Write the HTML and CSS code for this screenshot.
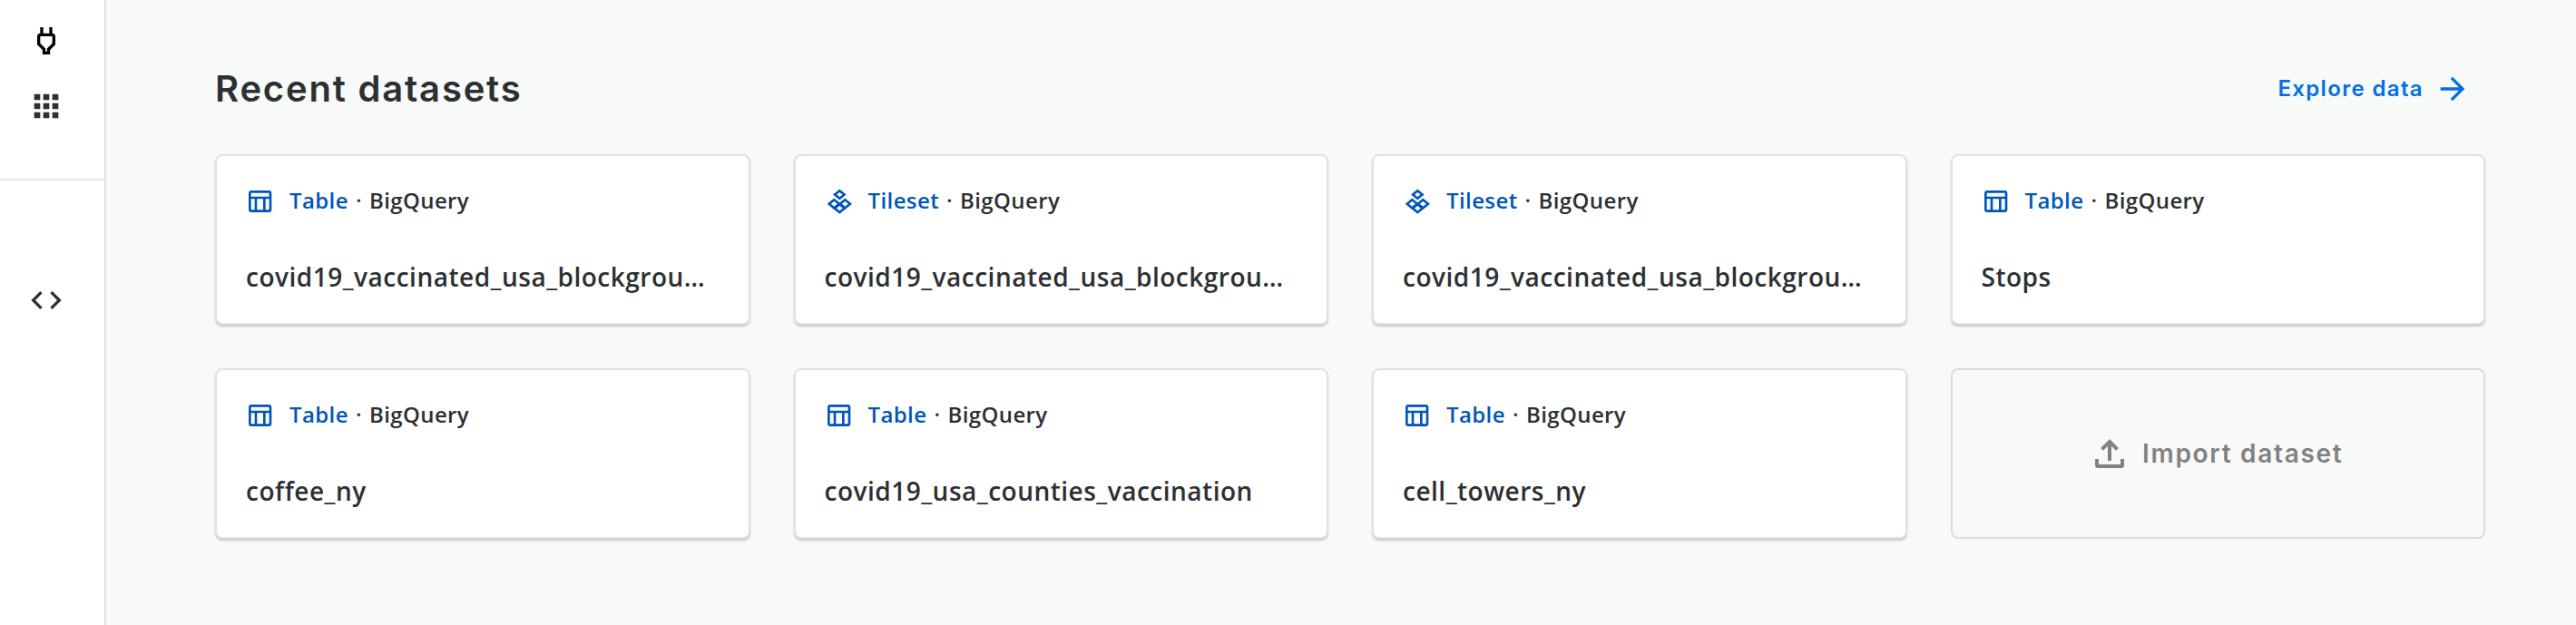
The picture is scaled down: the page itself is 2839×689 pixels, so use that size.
FILE: index.html
```
<!DOCTYPE html>
<html lang="en">
<head>
<meta charset="utf-8">
<title>Recent datasets</title>
<link rel="stylesheet" href="styles.css">
</head>
<body>
<svg class="sprite" aria-hidden="true">
  <symbol id="i-table" viewBox="0 0 24 24"><path d="M20 3H5C3.900 3 3 3.900 3 5v14c0 1.100.9 2 2 2h15c1.100 0 2-.9 2-2V5c0-1.100-.9-2-2-2zm0 2v3H5V5h15zm-5 14h-5v-9h5v9zM5 10h3v9H5v-9zm12 9v-9h3v9h-3z"/></symbol>
  <symbol id="i-tileset" viewBox="0 0 24 24"><g fill="none" stroke="currentColor" stroke-width="2"><path d="M13 3.200l3.900 3.200-3.900 3.200-3.900-3.200z"/><path d="M8.500 10.700l4.200 3.400-4.200 3.400-4.200-3.400z"/><path d="M17.500 10.700l4.200 3.400-4.200 3.400-4.200-3.400z"/><path d="M13 14.400l4.200 3.300L13 21l-4.200-3.300z"/></g></symbol>
</svg>
<div class="app">
  <nav class="sidebar">
    <div class="nav-top">
      <svg class="nav-icon plug" viewBox="0 0 24 24"><path d="M16 9v4.660l-3.500 3.510V19h-1v-1.830L8 13.650V9h8m0-6h-2v4h-4V3H8v4h-.01C6.900 6.990 6 7.890 6 8.980v5.520L9.500 18v3h5v-3l3.500-3.510V9c0-1.100-.9-2-2-2V3z"/></svg>
      <svg class="nav-icon" viewBox="0 0 24 24"><path d="M4 4h4v4H4zM10 4h4v4h-4zM16 4h4v4h-4zM4 10h4v4H4zM10 10h4v4h-4zM16 10h4v4h-4zM4 16h4v4H4zM10 16h4v4h-4zM16 16h4v4h-4z"/></svg>
    </div>
    <div class="nav-bottom">
      <svg class="nav-icon" viewBox="0 0 24 24"><path d="M9.400 16.600L4.800 12l4.600-4.600L8 6l-6 6 6 6 1.400-1.400zm5.200 0l4.600-4.600-4.600-4.600L16 6l6 6-6 6-1.400-1.400z"/></svg>
    </div>
  </nav>
  <main class="main">
    <header class="head">
      <h1 class="heading">Recent datasets</h1>
      <a class="explore"><span class="explore-label">Explore data</span><svg class="arrow" viewBox="0 0 24 24"><path d="M12 4l-1.410 1.410L16.170 11H4v2h12.170l-5.580 5.590L12 20l8-8z"/></svg></a>
    </header>
    <section class="grid">
      <article class="card"><div class="meta"><svg class="type-icon"><use href="#i-table"/></svg><span class="type">Table</span><span class="dot">·</span><span class="source">BigQuery</span></div><h2 class="name">covid19_vaccinated_usa_blockgrou…</h2></article>
      <article class="card"><div class="meta"><svg class="type-icon"><use href="#i-tileset"/></svg><span class="type">Tileset</span><span class="dot">·</span><span class="source">BigQuery</span></div><h2 class="name">covid19_vaccinated_usa_blockgrou…</h2></article>
      <article class="card"><div class="meta"><svg class="type-icon"><use href="#i-tileset"/></svg><span class="type">Tileset</span><span class="dot">·</span><span class="source">BigQuery</span></div><h2 class="name">covid19_vaccinated_usa_blockgrou…</h2></article>
      <article class="card"><div class="meta"><svg class="type-icon"><use href="#i-table"/></svg><span class="type">Table</span><span class="dot">·</span><span class="source">BigQuery</span></div><h2 class="name">Stops</h2></article>
      <article class="card"><div class="meta"><svg class="type-icon"><use href="#i-table"/></svg><span class="type">Table</span><span class="dot">·</span><span class="source">BigQuery</span></div><h2 class="name">coffee_ny</h2></article>
      <article class="card"><div class="meta"><svg class="type-icon"><use href="#i-table"/></svg><span class="type">Table</span><span class="dot">·</span><span class="source">BigQuery</span></div><h2 class="name">covid19_usa_counties_vaccination</h2></article>
      <article class="card"><div class="meta"><svg class="type-icon"><use href="#i-table"/></svg><span class="type">Table</span><span class="dot">·</span><span class="source">BigQuery</span></div><h2 class="name">cell_towers_ny</h2></article>
      <button class="import"><svg class="import-icon" viewBox="0 0 24 24"><path d="M7 9l1.410 1.410L11 7.830V16h2V7.830l2.590 2.580L17 9l-5-5-5 5z"/><path d="M4 15h2v3h12v-3h2v3.500a1.500 1.500 0 0 1-1.500 1.500h-13A1.500 1.500 0 0 1 4 18.500z"/></svg><span class="import-label">Import dataset</span></button>
    </section>
  </main>
</div>
</body>
</html>
```

FILE: styles.css
```
* { box-sizing: border-box; }
body { margin: 0; background: #f8faf9; color: #2c3032; font-family: "Open Sans", "Noto Sans", sans-serif; }
svg { fill: currentColor; flex: none; display: block; }
.sprite { position: absolute; width: 0; height: 0; }
.app { display: flex; height: 689px; overflow: hidden; }

.sidebar { flex: none; width: 117px; background: #fff; border-right: 2px solid #e0e1e1; }
.nav-icon { width: 40px; height: 40px; }
.nav-top { height: 199px; padding: 25px 0 0 31px; border-bottom: 2px solid #e6e6e6; display: flex; flex-direction: column; gap: 32px; }
.plug { color: #000; }
.nav-bottom { padding: 112px 0 0 31px; }

.main { flex: 1; min-width: 0; padding: 66px 100px 0 120px; }
.head { display: flex; justify-content: space-between; align-items: center; height: 64px; margin-bottom: 40px; }
.heading { margin: 0; font: 600 40px/64px Inter, sans-serif; letter-spacing: 1.8px; }
.explore { display: flex; align-items: center; gap: 12px; padding-right: 16px; color: #036fe2; }
.explore-label { font: 600 24px/40px Inter, sans-serif; letter-spacing: 1.35px; }
.arrow { width: 40px; height: 40px; }

.grid { display: grid; grid-template-columns: repeat(4, minmax(0, 1fr)); grid-auto-rows: 188px; gap: 48px; }
.card { padding: 29px 32px 0; background: #fff; border: 2px solid #e0e1e1; border-radius: 8px; box-shadow: 0 2px 2px rgba(44, 48, 50, .24); }
.meta { display: flex; align-items: center; height: 40px; font-size: 24px; line-height: 40px; font-weight: 600; letter-spacing: 0.4px; white-space: pre; }
.type-icon { width: 32px; height: 32px; margin: 2px 17px 0 -1px; color: #0056b8; }
.type { color: #0056b8; }
.dot { margin: 0 8px; }
.name { margin: 40px 0 0; font-size: 28px; line-height: 48px; font-weight: 600; letter-spacing: 0.5px; overflow: hidden; text-overflow: ellipsis; white-space: nowrap; }

.import { display: flex; align-items: center; justify-content: center; gap: 12px; padding: 0 5px 0 0; background: none; border: 2px solid #dadcdb; border-radius: 8px; color: #7f8282; }
.import-icon { width: 48px; height: 48px; }
.import-label { font: 600 28px/48px Inter, sans-serif; letter-spacing: 1.7px; }
```
